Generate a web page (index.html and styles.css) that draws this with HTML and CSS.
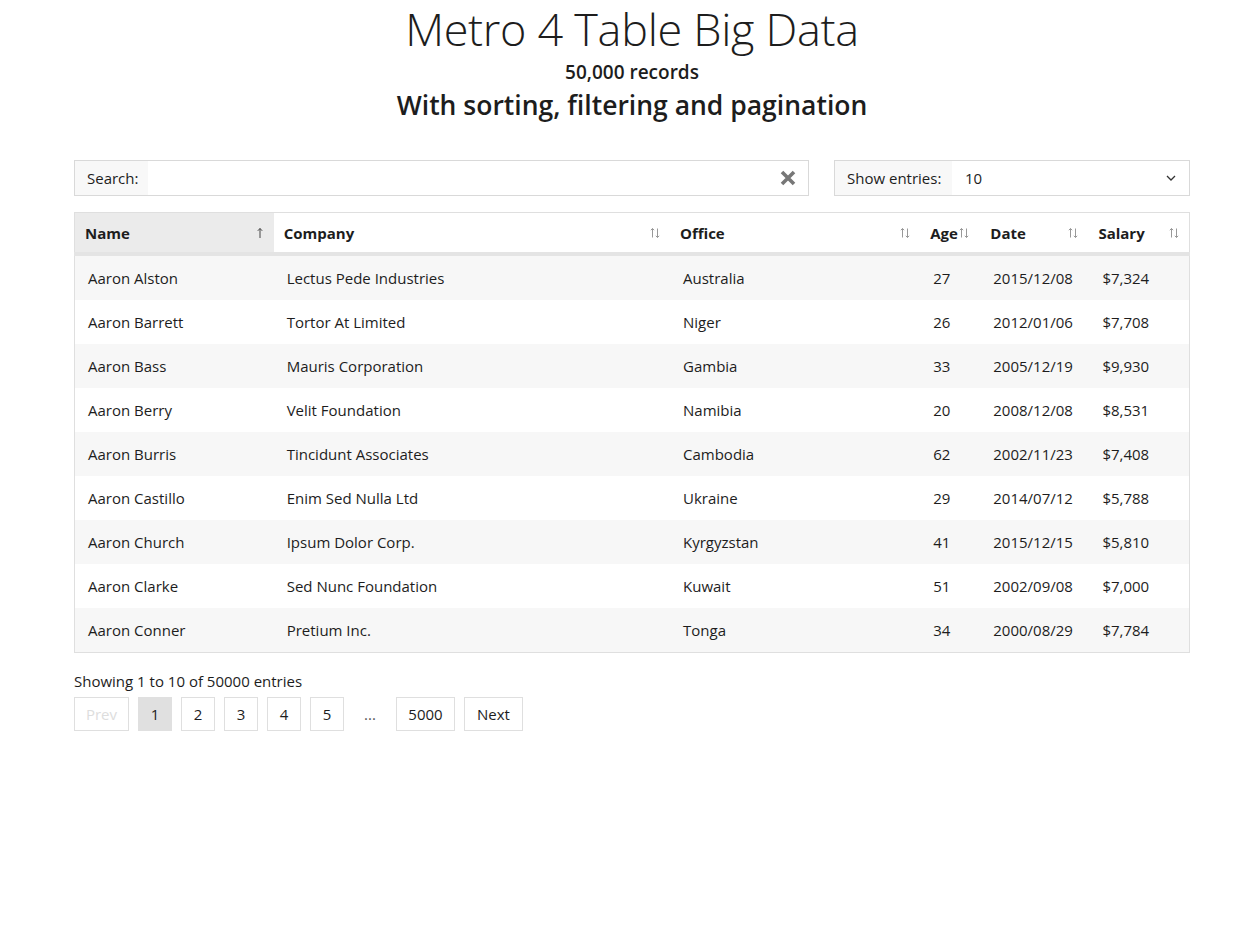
FILE: index.html
```html
<!DOCTYPE html>
<html lang="en">
<head>
<meta charset="utf-8">
<title>Metro 4 Table Big Data</title>
<link rel="stylesheet" href="styles.css">
</head>
<body>
<div class="page">
  <header class="heading">
    <h1 class="title">Metro 4 Table Big Data</h1>
    <div class="subtitle">50,000 records</div>
    <h2 class="tagline">With sorting, filtering and pagination</h2>
  </header>

  <div class="controls">
    <div class="search">
      <span class="prepend">Search:</span>
      <input class="search-input" type="text">
      <span class="clear">
        <svg width="18" height="18" viewBox="0 0 18 18"><path d="M3 3 L15 15 M15 3 L3 15" stroke="#777" stroke-width="3.6" stroke-linecap="butt"/></svg>
      </span>
    </div>
    <div class="entries">
      <span class="prepend">Show entries:</span>
      <span class="select-value">10</span>
      <span class="chevron">
        <svg width="10" height="6" viewBox="0 0 10 6"><path d="M1 1 L5 5 L9 1" stroke="#333" stroke-width="1.3" fill="none"/></svg>
      </span>
    </div>
  </div>

  <table class="data">
    <colgroup>
      <col style="width:199px"><col style="width:396px"><col style="width:250px"><col style="width:60px"><col style="width:108px"><col style="width:101px">
    </colgroup>
    <thead>
      <tr>
        <th class="sorted"><div class="th-in"><span>Name</span><svg class="sort" width="8" height="12" viewBox="0 0 8 12"><path d="M4 1.5 V11 M1.8 3.8 L4 1.5 L6.2 3.8" stroke="#444" stroke-width="1" fill="none"/></svg></div></th>
        <th><div class="th-in"><span>Company</span><svg class="sort" width="10" height="12" viewBox="0 0 10 12"><path d="M2.5 1.5 V10.5 M0.8 3.2 L2.5 1.5 L4.2 3.2 M7.5 1.5 V10.5 M5.8 8.8 L7.5 10.5 L9.2 8.8" stroke="#999" stroke-width="1" fill="none"/></svg></div></th>
        <th><div class="th-in"><span>Office</span><svg class="sort" width="10" height="12" viewBox="0 0 10 12"><path d="M2.5 1.5 V10.5 M0.8 3.2 L2.5 1.5 L4.2 3.2 M7.5 1.5 V10.5 M5.8 8.8 L7.5 10.5 L9.2 8.8" stroke="#999" stroke-width="1" fill="none"/></svg></div></th>
        <th class="tight"><div class="th-in"><span>Age</span><svg class="sort" width="10" height="12" viewBox="0 0 10 12"><path d="M2.5 1.5 V10.5 M0.8 3.2 L2.5 1.5 L4.2 3.2 M7.5 1.5 V10.5 M5.8 8.8 L7.5 10.5 L9.2 8.8" stroke="#999" stroke-width="1" fill="none"/></svg></div></th>
        <th><div class="th-in"><span>Date</span><svg class="sort" width="10" height="12" viewBox="0 0 10 12"><path d="M2.5 1.5 V10.5 M0.8 3.2 L2.5 1.5 L4.2 3.2 M7.5 1.5 V10.5 M5.8 8.8 L7.5 10.5 L9.2 8.8" stroke="#999" stroke-width="1" fill="none"/></svg></div></th>
        <th><div class="th-in"><span>Salary</span><svg class="sort" width="10" height="12" viewBox="0 0 10 12"><path d="M2.5 1.5 V10.5 M0.8 3.2 L2.5 1.5 L4.2 3.2 M7.5 1.5 V10.5 M5.8 8.8 L7.5 10.5 L9.2 8.8" stroke="#999" stroke-width="1" fill="none"/></svg></div></th>
      </tr>
    </thead>
    <tbody>
      <tr><td>Aaron Alston</td><td>Lectus Pede Industries</td><td>Australia</td><td>27</td><td>2015/12/08</td><td>$7,324</td></tr>
      <tr><td>Aaron Barrett</td><td>Tortor At Limited</td><td>Niger</td><td>26</td><td>2012/01/06</td><td>$7,708</td></tr>
      <tr><td>Aaron Bass</td><td>Mauris Corporation</td><td>Gambia</td><td>33</td><td>2005/12/19</td><td>$9,930</td></tr>
      <tr><td>Aaron Berry</td><td>Velit Foundation</td><td>Namibia</td><td>20</td><td>2008/12/08</td><td>$8,531</td></tr>
      <tr><td>Aaron Burris</td><td>Tincidunt Associates</td><td>Cambodia</td><td>62</td><td>2002/11/23</td><td>$7,408</td></tr>
      <tr><td>Aaron Castillo</td><td>Enim Sed Nulla Ltd</td><td>Ukraine</td><td>29</td><td>2014/07/12</td><td>$5,788</td></tr>
      <tr><td>Aaron Church</td><td>Ipsum Dolor Corp.</td><td>Kyrgyzstan</td><td>41</td><td>2015/12/15</td><td>$5,810</td></tr>
      <tr><td>Aaron Clarke</td><td>Sed Nunc Foundation</td><td>Kuwait</td><td>51</td><td>2002/09/08</td><td>$7,000</td></tr>
      <tr><td>Aaron Conner</td><td>Pretium Inc.</td><td>Tonga</td><td>34</td><td>2000/08/29</td><td>$7,784</td></tr>
    </tbody>
  </table>

  <div class="info">Showing 1 to 10 of 50000 entries</div>
  <ul class="pagination">
    <li class="pg disabled prev">Prev</li>
    <li class="pg active">1</li>
    <li class="pg">2</li>
    <li class="pg">3</li>
    <li class="pg">4</li>
    <li class="pg">5</li>
    <li class="pg dots">...</li>
    <li class="pg wide">5000</li>
    <li class="pg next">Next</li>
  </ul>
</div>
</body>
</html>
```

FILE: styles.css
```css
* { box-sizing: border-box; }
html, body { margin: 0; padding: 0; background: #fff; }
body {
  font-family: "Open Sans", "Noto Sans", sans-serif;
  font-size: 15px;
  color: #1d1d1d;
}
.page {
  margin: 0 70px 0 74px;
}
.heading {
  text-align: center;
}
.title {
  margin: 0;
  font-weight: 300;
  font-size: 45px;
  line-height: 57px;
  letter-spacing: -0.3px;
  color: #1d1d1d;
}
.subtitle {
  font-weight: 600;
  font-size: 19px;
  line-height: 26px;
  margin-top: 2px;
}
.tagline {
  margin: 0;
  font-weight: 600;
  font-size: 26.5px;
  line-height: 40px;
}
.controls {
  display: flex;
  gap: 25px;
  margin-top: 35px;
}
.search, .entries {
  display: flex;
  align-items: center;
  height: 36px;
  border: 1px solid #d9d9d9;
  background: #fff;
}
.search { width: 735px; }
.entries { width: 356px; }
.prepend {
  display: flex;
  align-items: center;
  height: 100%;
  padding: 0 12px;
  background: #f8f8f8;
  color: #1d1d1d;
  white-space: nowrap;
}
.entries .prepend { width: 117px; }
.search .prepend { width: 73px; }
.search-input {
  flex: 1;
  height: 100%;
  border: 0;
  outline: none;
  background: transparent;
}
.clear {
  display: flex;
  align-items: center;
  padding-right: 11px;
}
.select-value {
  flex: 1;
  padding-left: 13px;
}
.chevron {
  display: flex;
  padding-right: 13px;
}
.data {
  margin-top: 16px;
  width: 1116px;
  border-collapse: collapse;
  table-layout: fixed;
  border: 1px solid #dfdfdf;
}
.data th {
  padding: 0 10px;
  text-align: left;
  font-weight: 700;
  font-size: 15px;
  background: #fff;
  border-bottom: 4px solid #e4e4e4;
}
.data th.sorted { background: #ebebeb; }
.data th.tight { padding-right: 11px; }
.th-in {
  height: 39px;
  display: flex;
  justify-content: space-between;
  align-items: center;
}
.sort { flex: none; }
.data td {
  padding: 12px 13px;
  line-height: 20px;
  white-space: nowrap;
}
.data td:last-child { padding-left: 14px; }
.data tbody tr:nth-child(odd) td { background: #f7f7f7; }
.info {
  margin-top: 18px;
  line-height: 20px;
}
.pagination {
  list-style: none;
  margin: 6px 0 0;
  padding: 0;
  display: flex;
  gap: 9px;
}
.pg {
  height: 34px;
  width: 34px;
  display: flex;
  align-items: center;
  justify-content: center;
  border: 1px solid #dfdfdf;
  background: #fff;
  color: #1d1d1d;
}
.pg.active { background: #e0e0e0; border-color: #e0e0e0; }
.pg.disabled { color: #ddd; width: 55px; }
.pg.dots { border-color: transparent; color: #555; }
.pg.wide { width: 59px; }
.pg.next { width: 59px; }
```
